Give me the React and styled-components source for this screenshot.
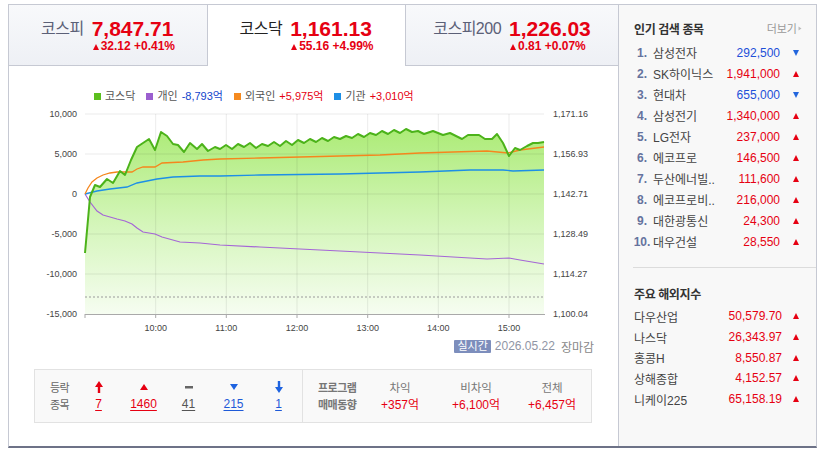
import React from "react";
import styled, { createGlobalStyle } from "styled-components";

const GlobalStyle = createGlobalStyle`
  html, body { margin: 0; padding: 0; background: #fff; }
  body {
    font-family: "Liberation Sans", "Noto Sans CJK KR", sans-serif;
    color: #333;
  }
`;

const RED = "#e60012";
const BLUE = "#1d4fd8";
const BORDER = "#c6c9d3";

const Frame = styled.div`
  margin: 4px 0 0 8px;
  width: 809px;
  height: 444px;
  box-sizing: border-box;
  border: 1px solid ${BORDER};
  border-bottom: 2px solid #6d7287;
  display: grid;
  grid-template-columns: 609px 1fr;
`;

const Main = styled.div`
  display: flex;
  flex-direction: column;
  background: #fff;
`;

/* ---------- index tabs ---------- */
const Tabs = styled.div`
  display: grid;
  grid-template-columns: 199px 197px 213px;
  height: 61px;
`;

const Tab = styled.div`
  box-sizing: border-box;
  display: flex;
  justify-content: center;
  align-items: flex-start;
  gap: 8px;
  padding-top: 13px;
  background: ${(p) => (p.$active ? "#fff" : "linear-gradient(#f8f9fb, #eef0f5)")};
  border-bottom: ${(p) => (p.$active ? "none" : `1px solid ${BORDER}`)};
  border-left: ${(p) => (p.$edge === "left" ? `1px solid ${BORDER}` : "none")};
  border-right: ${(p) => (p.$edge === "right" ? `1px solid ${BORDER}` : "none")};
`;

const TabName = styled.span`
  font-size: 16px;
  line-height: 22px;
  letter-spacing: -0.5px;
  color: ${(p) => (p.$active ? "#222" : "#5b6077")};
`;

const Quote = styled.div`
  display: flex;
  flex-direction: column;
`;

const Price = styled.span`
  font-size: 21px;
  line-height: 22px;
  font-weight: bold;
  color: ${RED};
`;

const Change = styled.span`
  display: flex;
  align-items: center;
  gap: 2px;
  padding-left: 1px;
  font-size: 12px;
  line-height: 13px;
  font-weight: bold;
  color: ${RED};
`;

const Tri = styled.i`
  display: inline-block;
  width: 0;
  height: 0;
  border-left: ${(p) => p.$w || 3.5}px solid transparent;
  border-right: ${(p) => p.$w || 3.5}px solid transparent;
  ${(p) =>
    p.$down
      ? `border-top: ${p.$h || 6}px solid ${p.$color};`
      : `border-bottom: ${p.$h || 6}px solid ${p.$color};`}
`;

/* ---------- chart ---------- */
const Legend = styled.div`
  display: flex;
  gap: 11px;
  padding: 23px 0 0 85px;
  font-size: 11px;
  line-height: 14px;
  color: #555;
`;

const LegendItem = styled.span`
  display: flex;
  align-items: center;
  gap: 4px;
`;

const Swatch = styled.i`
  width: 7px;
  height: 7px;
  background: ${(p) => p.$color};
`;

const LegendValue = styled.span`
  color: ${(p) => p.$color};
`;

const ChartSvg = styled.svg`
  display: block;
`;

const ChartFooter = styled.div`
  display: flex;
  justify-content: flex-end;
  align-items: center;
  gap: 4px;
  height: 14px;
  margin-top: 3px;
  padding-right: 24px;
  font-size: 12px;
`;

const Badge = styled.span`
  background: #7d8ebc;
  color: #fff;
  font-size: 11px;
  line-height: 13px;
  padding: 0 3px;
  border-radius: 1px;
`;

const FooterDate = styled.span`
  color: #9095a5;
`;

const FooterState = styled.span`
  color: #888;
  margin-left: 2px;
`;

/* ---------- breadth / program trading box ---------- */
const Stats = styled.div`
  display: flex;
  margin: 16px 0 0 25px;
  width: 558px;
  height: 54px;
  box-sizing: border-box;
  border: 1px solid #e2e2e2;
  background: #f9f9f9;
`;

const StatGroup = styled.div`
  box-sizing: border-box;
  width: ${(p) => p.$width}px;
  display: grid;
  grid-template-columns: ${(p) => p.$cols};
  grid-template-rows: 17px 17px;
  align-items: center;
  justify-items: center;
  padding: 8px 0 0 15px;
  & + & {
    border-left: 1px solid #e2e2e2;
  }
`;

const StatLabel = styled.span`
  justify-self: start;
  font-size: 11px;
  letter-spacing: -0.5px;
  font-weight: ${(p) => (p.$bold ? "bold" : "normal")};
  color: ${(p) => (p.$bold ? "#777" : "#666")};
`;

const StatHead = styled.span`
  font-size: 11.5px;
  color: #777;
`;

const StatNum = styled.span`
  font-size: 12px;
  color: ${(p) => p.$color};
  text-decoration: ${(p) => (p.$link ? "underline" : "none")};
  text-underline-offset: 2px;
`;

const Glyph = styled.svg`
  display: block;
`;

/* ---------- right side panel ---------- */
const Side = styled.aside`
  display: flex;
  flex-direction: column;
  background: #f8f8f8;
  border-left: 1px solid ${BORDER};
  padding: 15px 16px 0 14px;
`;

const SideHead = styled.div`
  display: flex;
  justify-content: space-between;
  align-items: center;
  height: 16px;
  padding-left: 1px;
`;

const SideTitle = styled.h3`
  margin: 0;
  font-size: 12px;
  font-weight: bold;
  letter-spacing: -0.4px;
  color: #333;
`;

const More = styled.span`
  display: flex;
  align-items: center;
  gap: 1px;
  font-size: 11px;
  color: #999;
  margin-right: -2px;
`;

const List = styled.ol`
  list-style: none;
  margin: ${(p) => p.$mt}px 0 0;
  padding: 0;
`;

const Row = styled.li`
  display: grid;
  grid-template-columns: ${(p) => (p.$ranked ? "18px 1fr auto 7px" : "1fr auto 7px")};
  column-gap: ${(p) => (p.$ranked ? "2px" : "0")};
  align-items: center;
  height: ${(p) => p.$h}px;
  font-size: 12px;
`;

const Rank = styled.span`
  text-align: center;
  font-weight: bold;
  color: #65739e;
`;

const ItemName = styled.span`
  color: #444;
  white-space: nowrap;
  padding-left: ${(p) => (p.$ranked ? 0 : 1)}px;
`;

const ItemValue = styled.span`
  color: ${(p) => p.$color};
  margin-right: 11px;
`;

const Divider = styled.hr`
  margin: 15px 0 0;
  border: 0;
  border-top: 1px solid #dcdcdc;
  margin-right: -16px;
`;

/* ---------- data ---------- */
const tabs = [
  { name: "코스피", price: "7,847.71", change: "32.12 +0.41%", edge: "right" },
  { name: "코스닥", price: "1,161.13", change: "55.16 +4.99%", active: true },
  { name: "코스피200", price: "1,226.03", change: "0.81 +0.07%", edge: "left" },
];

const legend = [
  { label: "코스닥", color: "#5cbf1e" },
  { label: "개인", color: "#9b5fcf", value: "-8,793억", valueColor: "#1144cc" },
  { label: "외국인", color: "#f58a1f", value: "+5,975억", valueColor: RED },
  { label: "기관", color: "#1d8fe6", value: "+3,010억", valueColor: RED },
];

const popular = [
  ["삼성전자", "292,500", false],
  ["SK하이닉스", "1,941,000", true],
  ["현대차", "655,000", false],
  ["삼성전기", "1,340,000", true],
  ["LG전자", "237,000", true],
  ["에코프로", "146,500", true],
  ["두산에너빌..", "111,600", true],
  ["에코프로비..", "216,000", true],
  ["대한광통신", "24,300", true],
  ["대우건설", "28,550", true],
];

const world = [
  ["다우산업", "50,579.70"],
  ["나스닥", "26,343.97"],
  ["홍콩H", "8,550.87"],
  ["상해종합", "4,152.57"],
  ["니케이225", "65,158.19"],
];

// chart geometry (page pixel space, the svg viewBox starts at 9,103)
const PL = 85;
const PR = 544;
const PT = 114;
const PB = 314;
const GRID_Y = [114, 154, 194, 234, 274];
const HOURS = [155.7, 226.3, 297, 367.7, 438.3, 509];
const HOUR_LABELS = ["10:00", "11:00", "12:00", "13:00", "14:00", "15:00"];
const LEFT_AXIS = ["10,000", "5,000", "0", "-5,000", "-10,000", "-15,000"];
const RIGHT_AXIS = ["1,171.16", "1,156.93", "1,142.71", "1,128.49", "1,114.27", "1,100.04"];

const kosdaq = [
  [85, 253], [90, 197], [95, 185], [100, 187], [107, 179], [113, 183], [120, 171], [125, 175],
  [131, 160], [137, 147], [143, 143], [149, 139], [155, 150], [161, 132], [167, 136], [173, 144],
  [178, 145], [184, 152], [190, 143], [197, 149], [202, 144], [208, 151], [215, 147], [220, 149],
  [226, 145], [232, 149], [238, 144], [244, 147], [250, 143], [256, 148], [262, 144], [268, 146],
  [274, 142], [280, 146], [286, 141], [292, 145], [298, 140], [304, 143], [310, 139], [316, 142],
  [322, 138], [328, 141], [334, 137], [340, 139], [346, 136], [352, 138], [358, 134], [364, 137],
  [370, 133], [376, 135], [382, 131], [388, 134], [394, 130], [400, 133], [406, 129], [412, 132],
  [418, 131], [424, 134], [433, 131], [443, 135], [450, 133], [462, 139], [468, 135], [479, 135],
  [485, 139], [492, 139], [497, 134], [503, 143], [509, 156], [515, 148], [520, 150], [527, 146],
  [533, 143], [538, 143], [544, 142],
];

const foreign = [
  [85, 194], [88, 188], [92, 182], [97, 178], [103, 175], [110, 173], [117, 172], [125, 172],
  [132, 172], [137, 169], [143, 167], [155, 167], [162, 163], [183, 162], [203, 160], [220, 159],
  [260, 158], [300, 157], [340, 156], [380, 155], [420, 153], [453, 152], [487, 151], [508, 153],
  [520, 150], [544, 147],
];

const institution = [
  [85, 194], [97, 191], [110, 189], [127, 187], [137, 183], [157, 179], [173, 177], [200, 176],
  [220, 176], [260, 175], [300, 174.5], [340, 174], [380, 173], [420, 172], [470, 170], [503, 170],
  [513, 171], [544, 170],
];

const individual = [
  [85, 194], [90, 202], [97, 211], [103, 215], [110, 217], [117, 219], [125, 221], [132, 224],
  [137, 228], [143, 232], [155, 234], [162, 237], [180, 242], [200, 243], [220, 245], [260, 247],
  [300, 249], [340, 251], [380, 253], [420, 255], [453, 257], [487, 259], [509, 258], [520, 260],
  [544, 264],
];

const pts = (arr) => arr.map(([x, y]) => `${x},${y}`).join(" ");

function Chart() {
  const axisText = { fontFamily: "Liberation Sans, sans-serif", fontSize: 9, fill: "#444" };
  return (
    <ChartSvg width="609" height="233" viewBox="9 103 609 233">
      <defs>
        <linearGradient id="kosdaqFill" x1="0" y1="125" x2="0" y2={PB} gradientUnits="userSpaceOnUse">
          <stop offset="0" stopColor="#abeb75" />
          <stop offset="0.55" stopColor="#d6f6bd" />
          <stop offset="1" stopColor="#f6fdf1" />
        </linearGradient>
      </defs>

      <polygon points={`${pts(kosdaq)} ${PR},${PB} ${PL},${PB}`} fill="url(#kosdaqFill)" />

      {GRID_Y.map((y) => (
        <line key={y} x1={PL} x2={PR} y1={y} y2={y} stroke="rgba(0,0,0,0.08)" />
      ))}
      {HOURS.map((x) => (
        <line key={x} x1={x} x2={x} y1={PT} y2={PB} stroke="rgba(0,0,0,0.08)" />
      ))}
      <line x1={PL} x2={PR} y1={297} y2={297} stroke="#9a9a9a" strokeDasharray="2 2" />
      <line x1={PL} x2={PR + 1} y1={PB + 0.5} y2={PB + 0.5} stroke="#a9a9a9" />
      {[PL, ...HOURS].map((x) => (
        <line key={x} x1={x} x2={x} y1={PB} y2={PB + 4} stroke="#a9a9a9" />
      ))}

      <polyline points={pts(individual)} fill="none" stroke="#a566d6" strokeWidth="1.2" />
      <polyline points={pts(institution)} fill="none" stroke="#1d8fe6" strokeWidth="1.3" />
      <polyline points={pts(foreign)} fill="none" stroke="#f5861d" strokeWidth="1.3" />
      <polyline points={pts(kosdaq)} fill="none" stroke="#4cb31a" strokeWidth="2" strokeLinejoin="round" />

      {LEFT_AXIS.map((t, i) => (
        <text key={t} x={77} y={PT + i * 40 + 3} textAnchor="end" {...axisText}>
          {t}
        </text>
      ))}
      {RIGHT_AXIS.map((t, i) => (
        <text key={t} x={553} y={PT + i * 40 + 3} {...axisText}>
          {t}
        </text>
      ))}
      {HOURS.map((x, i) => (
        <text key={x} x={x} y={331} textAnchor="middle" {...axisText}>
          {HOUR_LABELS[i]}
        </text>
      ))}
    </ChartSvg>
  );
}

const UpperArrow = ({ color, down }) => (
  <Glyph width="8" height="12" viewBox="0 0 8 12">
    <g transform={down ? "rotate(180 4 6)" : undefined}>
      <polygon points="4,0 8,6 5.2,6 5.2,12 2.8,12 2.8,6 0,6" fill={color} />
    </g>
  </Glyph>
);

const SmallTri = ({ color, down }) => (
  <Glyph width="8" height="6" viewBox="0 0 8 6">
    <polygon points={down ? "0,0 8,0 4,6" : "4,0 8,6 0,6"} fill={color} />
  </Glyph>
);

const Flat = () => (
  <Glyph width="8" height="4" viewBox="0 0 8 4">
    <rect x="0" y="1" width="8" height="2.5" fill="#666" />
  </Glyph>
);

export default function App() {
  return (
    <>
      <GlobalStyle />
      <Frame>
        <Main>
          <Tabs>
            {tabs.map((t) => (
              <Tab key={t.name} $active={t.active} $edge={t.edge}>
                <TabName $active={t.active}>{t.name}</TabName>
                <Quote>
                  <Price>{t.price}</Price>
                  <Change>
                    <Tri $color={RED} />
                    {t.change}
                  </Change>
                </Quote>
              </Tab>
            ))}
          </Tabs>

          <Legend>
            {legend.map((l) => (
              <LegendItem key={l.label}>
                <Swatch $color={l.color} />
                {l.label}
                {l.value && <LegendValue $color={l.valueColor}>{l.value}</LegendValue>}
              </LegendItem>
            ))}
          </Legend>

          <Chart />

          <ChartFooter>
            <Badge>실시간</Badge>
            <FooterDate>2026.05.22</FooterDate>
            <FooterState>장마감</FooterState>
          </ChartFooter>

          <Stats>
            <StatGroup $width={267} $cols="26px repeat(5, 45px)">
              <StatLabel>등락</StatLabel>
              <UpperArrow color={RED} />
              <SmallTri color={RED} />
              <Flat />
              <SmallTri color="#1e63e0" down />
              <UpperArrow color="#1e63e0" down />
              <StatLabel>종목</StatLabel>
              <StatNum $link $color={RED}>7</StatNum>
              <StatNum $link $color={RED}>1460</StatNum>
              <StatNum $link $color="#555">41</StatNum>
              <StatNum $link $color="#1e5ad8">215</StatNum>
              <StatNum $link $color="#1e5ad8">1</StatNum>
            </StatGroup>
            <StatGroup $width={289} $cols="44px repeat(3, 76px)">
              <StatLabel $bold>프로그램</StatLabel>
              <StatHead>차익</StatHead>
              <StatHead>비차익</StatHead>
              <StatHead>전체</StatHead>
              <StatLabel $bold>매매동향</StatLabel>
              <StatNum $color={RED}>+357억</StatNum>
              <StatNum $color={RED}>+6,100억</StatNum>
              <StatNum $color={RED}>+6,457억</StatNum>
            </StatGroup>
          </Stats>
        </Main>

        <Side>
          <SideHead>
            <SideTitle>인기 검색 종목</SideTitle>
            <More>
              더보기
              <Tri $w={2} $h={3} $color="#bbb" style={{ transform: "rotate(90deg)" }} />
            </More>
          </SideHead>
          <List $mt={6}>
            {popular.map(([name, price, up], i) => (
              <Row key={name} $ranked $h={21}>
                <Rank>{i + 1}.</Rank>
                <ItemName $ranked>{name}</ItemName>
                <ItemValue $color={up ? RED : BLUE}>{price}</ItemValue>
                {up ? <Tri $color={RED} $h={6} /> : <Tri $down $color="#2266dd" $h={6} />}
              </Row>
            ))}
          </List>

          <Divider />

          <SideHead style={{ marginTop: 17 }}>
            <SideTitle>주요 해외지수</SideTitle>
          </SideHead>
          <List $mt={5}>
            {world.map(([name, value]) => (
              <Row key={name} $h={20.7}>
                <ItemName>{name}</ItemName>
                <ItemValue $color={RED}>{value}</ItemValue>
                <Tri $color={RED} $h={6} />
              </Row>
            ))}
          </List>
        </Side>
      </Frame>
    </>
  );
}
